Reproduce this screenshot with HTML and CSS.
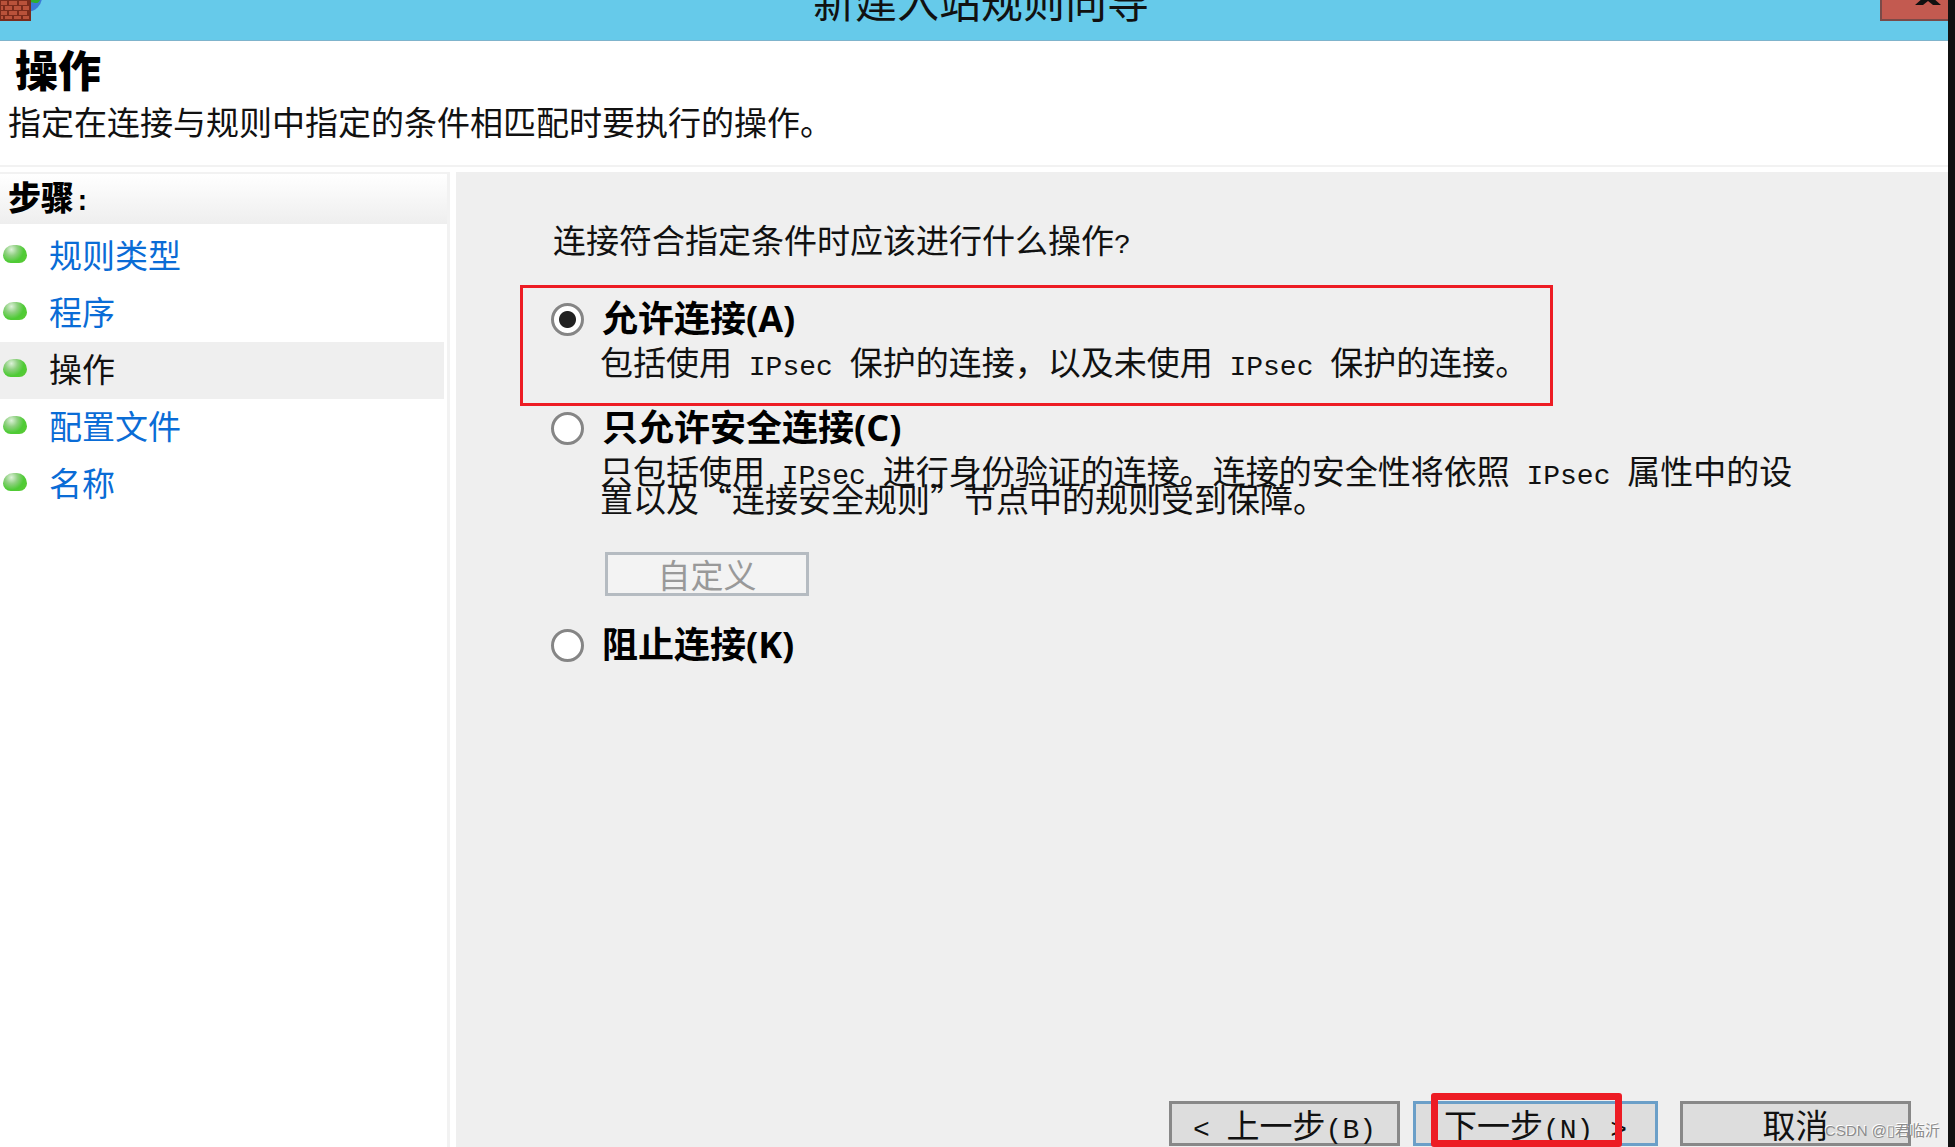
FILE: index.html
```
<!DOCTYPE html>
<html lang="zh-CN">
<head>
  <meta charset="UTF-8" />
  <meta name="viewport" content="width=device-width, initial-scale=1.0"/>
  <title>新建入站规则向导</title>
  <link rel="stylesheet" href="styles.css">
</head>
<body>
  <div class="window">
    <header class="titlebar">
      <svg class="app-icon" viewBox="0 0 68 40">
        <circle cx="27" cy="-3" r="15" fill="#3a7bd8"/>
        <path d="M22 -4L41 -4Q40 4 35 3Q30 1 22 4Z" fill="#2fae2f"/>
        <rect x="0" y="0" width="31" height="21" fill="#7a2c1c"/>
        <path d="M1 1h6v4h-6zM9 1h8v4h-8zM19 1h8v4h-8zM1 6h2v4h-2zM5 6h7v4h-7zM14 6h7v4h-7zM23 6h6v4h-6zM1 11h6v4h-6zM9 11h8v4h-8zM19 11h8v4h-8zM1 16h2v3h-2zM5 16h7v3h-7zM14 16h7v3h-7zM23 16h6v3h-6z" fill="#b9523a"/>
      </svg>
      <span class="title">新建入站规则向导</span>
      <button type="button" class="close" aria-label="关闭">
        <svg width="28" height="20" viewBox="0 0 28 20">
          <path d="M1 5h8l5-4 5 4h8L18 -3h-8z" fill="#111"/>
        </svg>
      </button>
    </header>

    <div class="intro">
      <h1>操作</h1>
      <p>指定在连接与规则中指定的条件相匹配时要执行的操作。</p>
    </div>

    <div class="content">
      <nav class="steps">
        <h2>步骤<span class="latin">:</span></h2>
        <ul>
          <li><a href="#">规则类型</a></li>
          <li><a href="#">程序</a></li>
          <li class="current"><a href="#">操作</a></li>
          <li><a href="#">配置文件</a></li>
          <li><a href="#">名称</a></li>
        </ul>
      </nav>

      <form class="main">
        <p class="question">连接符合指定条件时应该进行什么操作<span class="latin">?</span></p>

        <div class="option highlighted">
          <input type="radio" id="allow" name="action" checked>
          <label for="allow">允许连接(A)</label>
          <p>包括使用<span class="latin"> IPsec </span>保护的连接，以及未使用<span class="latin"> IPsec </span>保护的连接。</p>
        </div>

        <div class="option">
          <input type="radio" id="secure" name="action">
          <label for="secure">只允许安全连接(C)</label>
          <p>只包括使用<span class="latin"> IPsec </span>进行身份验证的连接。连接的安全性将依照<span class="latin"> IPsec </span>属性中的设<br>置以及<span class="quote">“</span>连接安全规则<span class="quote close-quote">”</span>节点中的规则受到保障。</p>
          <button type="button" class="custom" disabled>自定义</button>
        </div>

        <div class="option">
          <input type="radio" id="block" name="action">
          <label for="block">阻止连接(K)</label>
        </div>

        <div class="buttons">
          <button type="button"><span class="latin">&lt; </span>上一步<span class="latin">(B)</span></button>
          <div class="next">
            <button type="submit">下一步<span class="latin">(N) &gt;</span></button>
            <span class="mark"></span>
          </div>
          <button type="button">取消</button>
        </div>
      </form>
    </div>
    <span class="watermark">CSDN @▯君临沂</span>
  </div>
</body>
</html>
```
FILE: styles.css
```
* {
  box-sizing: border-box;
}
body {
  margin: 0;
  font-family: "Noto Sans CJK SC", sans-serif;
  font-size: 33px;
  color: #111;
  background: #111;
}
h1, h2, p, ul {
  margin: 0;
  padding: 0;
}
.window {
  position: relative;
  display: flex;
  flex-direction: column;
  height: 100vh;
  margin-right: 7px;
  overflow: hidden;
  background: #fff;
}
.latin {
  font-family: "Liberation Mono", monospace;
  font-size: 28px;
  line-height: 0;
  white-space: pre;
}
.titlebar {
  display: flex;
  justify-content: space-between;
  align-items: flex-start;
  height: 41px;
  flex-shrink: 0;
  overflow: hidden;
  background: #66caea;
  border-bottom: 1px solid #7fb4cc;
}
.app-icon {
  width: 68px;
  height: 40px;
}
.title {
  padding-left: 14px;
  font-size: 42px;
  line-height: 42px;
  margin-top: -21px;
}
.close {
  width: 68px;
  height: 21px;
  padding: 0 0 0 32px;
  background: #c35a50;
  border: 2px solid #7a4a48;
  border-width: 0 0 2px 2px;
}
.close svg {
  display: block;
}
.intro {
  height: 126px;
  flex-shrink: 0;
  padding: 5px 8px;
  border-bottom: 2px solid #f2f2f2;
}
.intro h1 {
  padding-left: 7px;
  font-size: 43px;
  line-height: 44px;
  font-weight: 900;
  color: #000;
}
.intro p {
  margin-top: 9px;
  line-height: 44px;
}
.content {
  display: flex;
  flex: 1;
  padding-top: 5px;
}
.steps {
  width: 450px;
  border-top: 2px solid #f2f2f2;
  border-right: 3px solid #f2f2f2;
}
.steps h2 {
  height: 50px;
  padding-left: 8px;
  font-size: 33px;
  line-height: 44px;
  font-weight: 900;
  color: #000;
  background: linear-gradient(#fff, #eee);
}
.steps ul {
  list-style: none;
  padding: 4px 3px 0 0;
}
.steps li {
  display: flex;
  align-items: center;
  gap: 22px;
  height: 57px;
  padding: 0 0 5px 3px;
}
.steps li::before {
  content: "";
  width: 24px;
  height: 18px;
  border-radius: 12px 12px 9px 9px;
  background: radial-gradient(circle at 35% 25%, #dcf2d8 0, #8fd080 30%, #4ecb35 60%, #5ec834 100%);
}
.steps a {
  color: #0a6cd6;
  text-decoration: none;
}
.steps .current {
  background: #efefef;
}
.steps .current a {
  color: #111;
}
.main {
  display: flex;
  flex-direction: column;
  flex: 1;
  margin-left: 6px;
  padding: 43px 37px 1px 64px;
  background: #efefef;
}
.question {
  padding-left: 33px;
  line-height: 48px;
}
.option {
  display: grid;
  grid-template-columns: 49px 1fr;
  align-items: center;
  padding-left: 31px;
}
.option.highlighted {
  align-self: flex-start;
  margin-top: 22px;
  padding: 9px 22px 28px 28px;
  border: 3px solid #ed1c24;
}
.option input {
  appearance: none;
  width: 33px;
  height: 33px;
  margin: 0;
  border: 3px solid #858585;
  border-radius: 50%;
  background: #fff;
}
.option input:checked {
  background: radial-gradient(circle, #222 8px, #fff 9px);
}
.option label {
  padding-left: 2px;
  font-family: "Open Sans", "Noto Sans CJK SC", sans-serif;
  font-size: 36px;
  line-height: 44px;
  font-weight: bold;
  color: #000;
}
.option p {
  grid-column: 2;
  padding-top: 6px;
  line-height: 28px;
}
.quote {
  display: inline-block;
  width: 33px;
  text-align: center;
}
.close-quote {
  text-align: left;
}
button {
  font-family: inherit;
  font-size: 33px;
  color: #111;
}
.custom {
  grid-column: 2;
  width: 204px;
  height: 44px;
  margin: 40px 0 27px 5px;
  padding: 0;
  line-height: 38px;
  color: #999;
  background: #f3f3f3;
  border: 3px solid #b5bbc1;
}
.buttons {
  display: flex;
  justify-content: flex-end;
  margin-top: auto;
}
.buttons button {
  width: 231px;
  height: 45px;
  padding: 0;
  line-height: 38px;
  background: #ddd;
  border: 3px solid #888;
}
.next {
  position: relative;
  display: flex;
  margin: 0 22px 0 13px;
}
.buttons .next button {
  width: 245px;
  border-color: #6b9fc8;
}
.mark {
  position: absolute;
  left: 18px;
  top: -8px;
  width: 191px;
  height: 54px;
  border: 7px solid #ed1c24;
  border-radius: 3px;
}
.watermark {
  position: absolute;
  right: 8px;
  bottom: 4px;
  font-family: "Liberation Sans", "Noto Sans CJK SC", sans-serif;
  font-size: 15px;
  line-height: 24px;
  color: #8c8c8c;
  text-shadow: -1px -1px 0 #fff;
}
```
